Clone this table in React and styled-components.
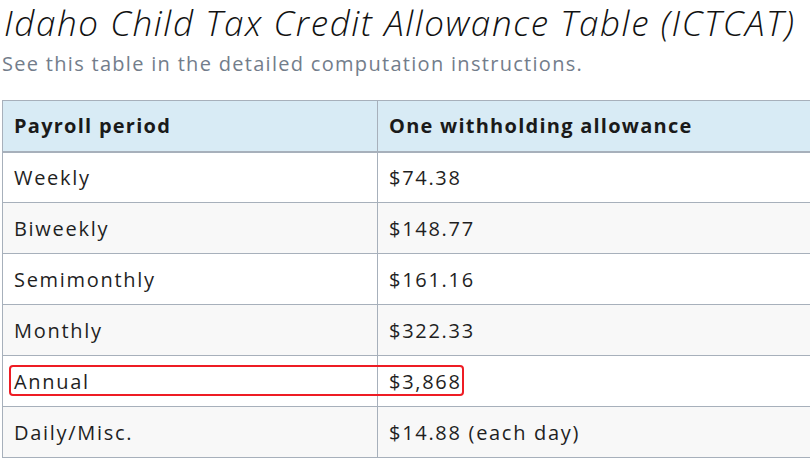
import styled, { createGlobalStyle } from "styled-components";

const Global = createGlobalStyle`
    html, body {
        margin: 0;
        padding: 0;
        background: #ffffff;
        overflow: hidden;
    }
    body {
        font-family: "Open Sans", "Liberation Sans", sans-serif;
        color: #1b1b1b;
    }
`;

const Page = styled.div`
    width: 810px;
    height: 459px;
    overflow: hidden;
    padding-left: 2px;
`;

const Title = styled.h2`
    margin: 0;
    padding: 3px 0 0 2px;
    font-size: 35px;
    font-weight: 300;
    font-style: italic;
    letter-spacing: 1.6px;
    line-height: 40px;
    white-space: nowrap;
    color: #111;
`;

const Subtitle = styled.p`
    margin: 9px 0 0 0;
    font-size: 20px;
    letter-spacing: 1.3px;
    line-height: 24px;
    color: #737d8b;
    white-space: nowrap;
`;

const Table = styled.table`
    margin-top: 24px;
    width: 830px;
    border-collapse: collapse;
    font-size: 20px;
    letter-spacing: 1.7px;
`;

const HeadCell = styled.th`
    height: 51px;
    box-sizing: border-box;
    padding: 0 11px;
    text-align: left;
    font-weight: 700;
    letter-spacing: 1.25px;
    background: #d8ebf5;
    border: 1px solid #a7b0bb;
    border-bottom-width: 2px;
    color: #1a1a1a;
    width: ${(p) => p.$w || "auto"};
`;

const Row = styled.tr`
    background: ${(p) => (p.$alt ? "#f8f8f8" : "#ffffff")};
`;

const Cell = styled.td`
    height: 51px;
    box-sizing: border-box;
    padding: 0 11px;
    border: 1px solid #a7b0bb;
    color: #1f1f1f;
`;

const Marked = styled.span`
    position: relative;
    display: inline-block;

    &::after {
        content: "";
        position: absolute;
        left: -5px;
        top: -3px;
        width: 455px;
        height: 31px;
        border: 2px solid #ee1c24;
        border-radius: 4px;
        box-sizing: border-box;
    }
`;

const rows = [
    ["Weekly", "$74.38"],
    ["Biweekly", "$148.77"],
    ["Semimonthly", "$161.16"],
    ["Monthly", "$322.33"],
    ["Annual", "$3,868"],
    ["Daily/Misc.", "$14.88 (each day)"],
];

function App() {
    return (
        <Page>
            <Global />
            <Title>Idaho Child Tax Credit Allowance Table (ICTCAT)</Title>
            <Subtitle>See this table in the detailed computation instructions.</Subtitle>
            <Table>
                <thead>
                    <tr>
                        <HeadCell $w="375px">Payroll period</HeadCell>
                        <HeadCell>One withholding allowance</HeadCell>
                    </tr>
                </thead>
                <tbody>
                    {rows.map(([period, amount], i) => (
                        <Row key={period} $alt={i % 2 === 1}>
                            <Cell>{period === "Annual" ? <Marked>{period}</Marked> : period}</Cell>
                            <Cell>{amount}</Cell>
                        </Row>
                    ))}
                </tbody>
            </Table>
        </Page>
    );
}

export default App;
